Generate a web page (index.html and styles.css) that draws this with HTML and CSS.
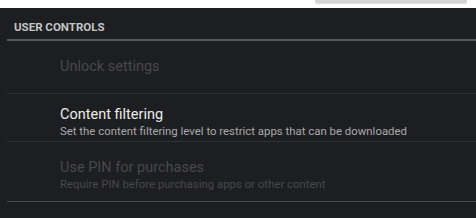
FILE: index.html
```html
<!DOCTYPE html>
<html lang="en">
<head>
  <meta charset="UTF-8" />
  <title>User controls</title>
  <link rel="stylesheet" href="styles.css">
</head>
<body>
  <div class="topbar">
    <div class="search-edge"></div>
  </div>

  <div class="panel">
    <h3 class="category">USER CONTROLS</h3>

    <ul class="prefs">
      <li class="pref disabled single">
        <div class="title">Unlock settings</div>
      </li>
      <li class="pref">
        <div class="title">Content filtering</div>
        <div class="summary">Set the content filtering level to restrict apps that can be downloaded</div>
      </li>
      <li class="pref disabled">
        <div class="title">Use PIN for purchases</div>
        <div class="summary">Require PIN before purchasing apps or other content</div>
      </li>
    </ul>
  </div>
</body>
</html>
```

FILE: styles.css
```css
* {
  box-sizing: border-box;
  margin: 0;
  padding: 0;
}

body {
  font-family: Roboto, 'Noto Sans', sans-serif;
  background-color: #1d1e22;
  width: 476px;
  height: 218px;
  overflow: hidden;
}

/* white strip at the top with the bottom of a box */
.topbar {
  height: 8px;
  background-color: #fff;
  position: relative;
}

.search-edge {
  position: absolute;
  left: 315px;
  top: 0;
  width: 152px;
  height: 3px;
  background-color: #d4d4d4;
  border-radius: 0 0 2px 2px;
  box-shadow: 0 1px 1px rgba(0,0,0,0.15);
}

.panel {
  padding-left: 7px;
}

.category {
  font-size: 11.5px;
  font-weight: bold;
  color: #c4c4c4;
  padding: 12px 0 0 7px;
  height: 33px;
  border-bottom: 2px solid #55575a;
}

.prefs {
  list-style: none;
}

.pref {
  padding: 12px 0 0 53px;
  height: 48px;
  border-bottom: 1px solid #313236;
}

.pref.single {
  height: 53px;
  padding-top: 17px;
}

.pref:last-child {
  height: 60px;
  padding-top: 17px;
  border-bottom: 1px solid #4a4b4f;
}

.title {
  font-size: 14.5px;
  color: #ececec;
  line-height: 17px;
}

.summary {
  font-size: 11.4px;
  color: #a9a9a9;
  line-height: 14px;
  margin-top: 1px;
}

.disabled .title,
.disabled .summary {
  color: #47484c;
}
```
